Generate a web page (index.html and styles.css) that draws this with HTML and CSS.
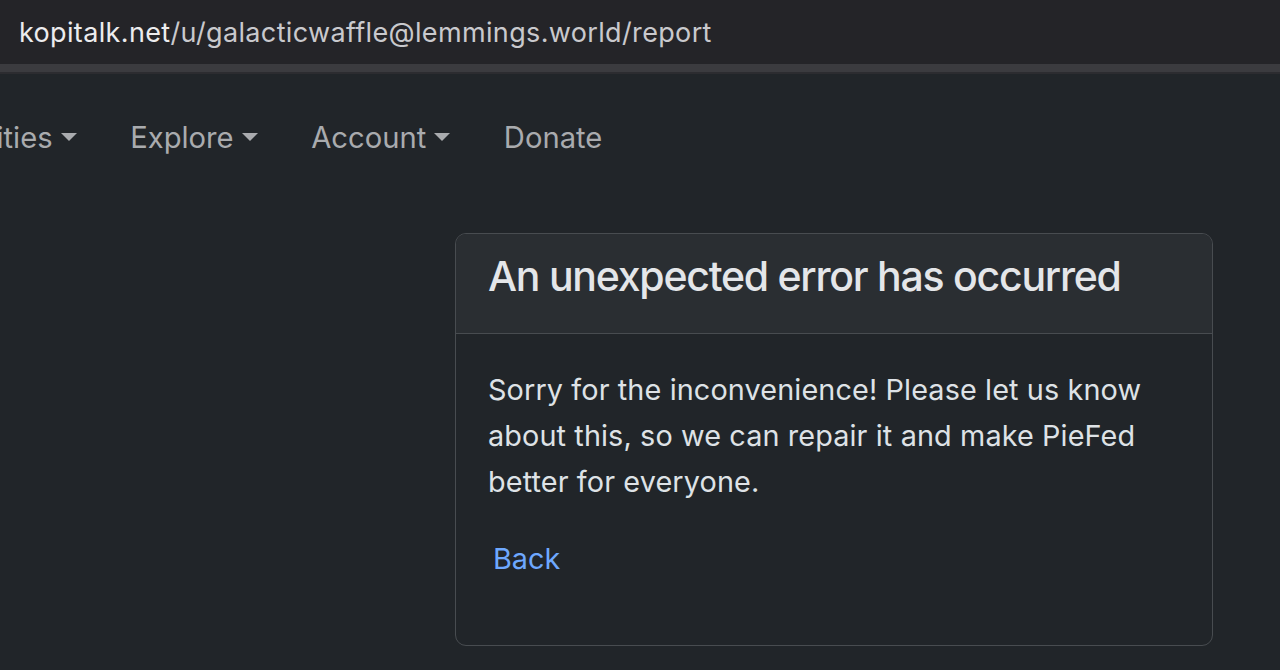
FILE: index.html
```html
<!DOCTYPE html>
<html lang="en">
<head>
<meta charset="utf-8">
<title>An unexpected error has occurred</title>
<link rel="stylesheet" href="styles.css">
</head>
<body>
<header class="urlbar">
  <span class="url-host">kopitalk.net</span><span class="url-path">/u/galacticwaffle@lemmings.world/report</span>
</header>
<div class="urlbar-edge"></div>
<nav class="navbar">
  <ul class="nav">
    <li class="nav-item"><a class="nav-link dropdown-toggle" href="#">Communities</a></li>
    <li class="nav-item"><a class="nav-link dropdown-toggle" href="#">Explore</a></li>
    <li class="nav-item"><a class="nav-link dropdown-toggle" href="#">Account</a></li>
    <li class="nav-item"><a class="nav-link" href="#">Donate</a></li>
  </ul>
</nav>
<main class="layout">
  <div class="sidebar-space"></div>
  <section class="card">
    <div class="card-header">
      <h1 class="card-title">An unexpected error has occurred</h1>
    </div>
    <div class="card-body">
      <p class="card-text">Sorry for the inconvenience! Please let us know about this, so we can repair it and make PieFed better for everyone.</p>
      <p class="card-actions"><a class="back-link" href="#">Back</a></p>
    </div>
  </section>
</main>
</body>
</html>
```

FILE: styles.css
```css
* { box-sizing: border-box; }

html, body {
  margin: 0;
  padding: 0;
  background: #212529;
  overflow: hidden;
}

body {
  font-family: Inter, "Noto Sans", "Liberation Sans", sans-serif;
  color: #dee2e6;
  height: 670px;
}

.urlbar {
  height: 64px;
  background: #242428;
  padding: 0 0 0 19px;
  display: flex;
  align-items: center;
  font-size: 27px;
  letter-spacing: 0.35px;
  white-space: nowrap;
}

.url-host { color: #ececee; }
.url-path { color: #c9c9cd; }

.urlbar-edge {
  height: 10px;
  background: #3b3b3f;
  border-bottom: 2px solid #2c2c30;
}

.navbar {
  height: 126px;
  display: flex;
  align-items: center;
  overflow: hidden;
}

.nav {
  list-style: none;
  margin: 0 0 0 -128px;
  padding: 0;
  display: flex;
  gap: 53.6px;
  white-space: nowrap;
}

.nav-link {
  color: #a9abae;
  text-decoration: none;
  font-size: 29.2px;
  display: flex;
  align-items: center;
}

.dropdown-toggle::after {
  content: "";
  display: inline-block;
  margin-left: 8px;
  border-top: 8px solid #a9abae;
  border-left: 8px solid transparent;
  border-right: 8px solid transparent;
}

.layout {
  display: grid;
  grid-template-columns: 455px 758px;
  margin-top: 33px;
}

.card {
  border: 1px solid #484c50;
  border-radius: 11px;
  height: 413px;
  overflow: hidden;
}

.card-header {
  background: #2a2e32;
  border-bottom: 1px solid #484c50;
  height: 100px;
  padding: 16px 32px 0;
}

.card-title {
  margin: 0;
  font-size: 41px;
  font-weight: 500;
  line-height: 52px;
  color: #e4e6e9;
  letter-spacing: -1.25px;
  white-space: nowrap;
}

.card-body {
  padding: 33px 32px 0;
}

.card-text {
  margin: 0 0 31px;
  font-size: 28.8px;
  line-height: 46px;
  color: #dee2e6;
  letter-spacing: 0.12px;
}

.card-actions {
  margin: 0;
  padding-left: 5px;
  font-size: 28.8px;
  line-height: 46px;
}

.back-link {
  color: #6ea8fe;
  text-decoration: none;
}
```
